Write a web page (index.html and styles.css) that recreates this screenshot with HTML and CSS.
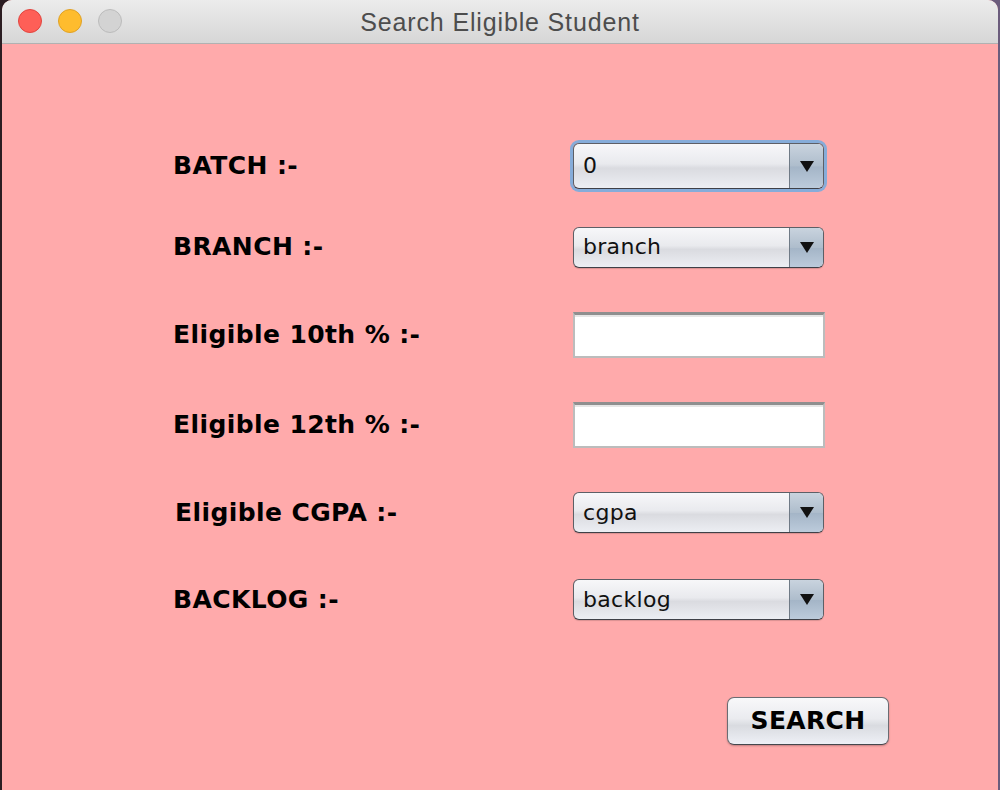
FILE: index.html
```html
<!DOCTYPE html>
<html>
<head>
<meta charset="utf-8">
<title>Search Eligible Student</title>
<link rel="stylesheet" href="styles.css">
</head>
<body>
<div class="window">
  <div class="titlebar">
    <div class="lights">
      <span class="light red"></span>
      <span class="light yellow"></span>
      <span class="light gray"></span>
    </div>
    <div class="title">Search Eligible Student</div>
  </div>
  <div class="content">
    <div class="form">
      <div class="label">BATCH :-</div>
      <div class="ctrl"><div class="combo focused"><span class="val">0</span><span class="arrow"><i></i></span></div></div>

      <div class="label">BRANCH :-</div>
      <div class="ctrl"><div class="combo"><span class="val">branch</span><span class="arrow"><i></i></span></div></div>

      <div class="label">Eligible 10th % :-</div>
      <div class="ctrl"><div class="field"></div></div>

      <div class="label">Eligible 12th % :-</div>
      <div class="ctrl"><div class="field"></div></div>

      <div class="label shift">Eligible CGPA :-</div>
      <div class="ctrl"><div class="combo"><span class="val">cgpa</span><span class="arrow"><i></i></span></div></div>

      <div class="label">BACKLOG :-</div>
      <div class="ctrl"><div class="combo"><span class="val">backlog</span><span class="arrow"><i></i></span></div></div>
    </div>
    <div class="actions">
      <button class="btn">SEARCH</button>
    </div>
  </div>
</div>
</body>
</html>
```

FILE: styles.css
```css
html, body {
  margin: 0;
  padding: 0;
}
body {
  background: linear-gradient(90deg, #2b1d22 0, #2b1d22 50%, #6b5c7c 50%, #6b5c7c 100%);
  width: 1000px;
  height: 790px;
  overflow: hidden;
}
.window {
  margin: 0 2px;
  height: 790px;
  border-radius: 10px 10px 0 0;
  overflow: hidden;
  background: #ffaaab;
  display: flex;
  flex-direction: column;
}
.titlebar {
  height: 43px;
  flex: none;
  background: linear-gradient(#ececec, #d6d6d6);
  border-bottom: 1px solid #b1b1b1;
  position: relative;
  display: flex;
  align-items: center;
  justify-content: center;
}
.lights {
  position: absolute;
  left: 16px;
  top: 9px;
  display: flex;
  gap: 16px;
}
.light {
  width: 22px;
  height: 22px;
  border-radius: 50%;
  box-sizing: content-box;
  display: block;
}
.red { background: #fe5f57; border: 1px solid #e1453f; }
.yellow { background: #febc2e; border: 1px solid #dfa126; }
.gray { background: #d3d3d3; border: 1px solid #bbbbbb; }
.title {
  font-family: "Liberation Sans", Arial, sans-serif;
  font-size: 25px;
  letter-spacing: 0.85px;
  color: #4d4d4d;
  margin-top: 2px;
}
.content {
  flex: 1;
  padding: 81px 0 0 171px;
}
.form {
  display: grid;
  grid-template-columns: 400px 252px;
  grid-template-rows: 82px 80px 96px 84px 91px 83px;
  align-items: center;
}
.label {
  font-family: "DejaVu Sans", Verdana, sans-serif;
  font-weight: bold;
  font-size: 25px;
  letter-spacing: 0.4px;
  color: #000;
  line-height: 30px;
}
.label.shift { margin-left: 2px; }
.ctrl {
  display: flex;
  align-items: center;
}
.combo {
  width: 251px;
  height: 41px;
  box-sizing: border-box;
  border: 1px solid #5d5f66;
  border-bottom-color: #3e4047;
  border-radius: 6px;
  background: linear-gradient(#f7f7f9 0%, #e9eaee 45%, #dadbe0 55%, #eceef3 100%);
  display: flex;
  align-items: center;
  overflow: hidden;
  box-shadow: 0 1px 1px rgba(0,0,0,0.15);
}
.combo.focused {
  height: 46px;
  box-shadow: 0 0 0 3px #86acd9;
}
.val {
  flex: 1;
  font-family: "DejaVu Sans", "Lucida Grande", sans-serif;
  font-size: 22px;
  letter-spacing: 0.3px;
  color: #111;
  padding-left: 9px;
  line-height: 26px;
}
.arrow {
  width: 33px;
  align-self: stretch;
  border-left: 1px solid #6f7a86;
  background: linear-gradient(#c9d3de 0%, #aebdcc 50%, #a4b5c7 52%, #bccbdb 100%);
  display: flex;
  align-items: center;
  justify-content: center;
}
.arrow i {
  display: block;
  width: 0;
  height: 0;
  border-left: 7px solid transparent;
  border-right: 7px solid transparent;
  border-top: 11px solid #111;
}
.field {
  width: 252px;
  height: 46px;
  box-sizing: border-box;
  background: #fff;
  border: 2px solid #bcbcbc;
  border-top: 3px solid #8f8f8f;
  box-shadow: inset 0 2px 0 #e6e6e6;
}
.actions {
  display: flex;
  justify-content: flex-end;
  padding-right: 109px;
  margin-top: 56px;
}
.btn {
  width: 162px;
  height: 48px;
  margin: 0;
  padding: 0;
  border: 1px solid #6a6c72;
  border-bottom-color: #45474d;
  border-radius: 7px;
  background: linear-gradient(#f8f8fa 0%, #eaebef 45%, #d9dbe0 60%, #eef0f6 100%);
  box-shadow: 0 1px 2px rgba(0,0,0,0.25);
  font-family: "DejaVu Sans", Verdana, sans-serif;
  font-weight: bold;
  font-size: 25px;
  letter-spacing: 0.3px;
  color: #000;
  line-height: 30px;
}
```
